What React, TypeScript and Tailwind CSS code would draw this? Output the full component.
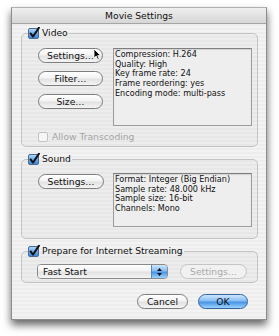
import type { ReactNode } from "react";

/* Movie Settings — an Aqua-era sheet, drawn at its shrunk screenshot size */

const aquaGray =
  "bg-[linear-gradient(to_bottom,#ffffff_0%,#f3f3f3_45%,#e2e2e2_55%,#f4f4f4_100%)]";
const aquaBlue =
  "bg-[linear-gradient(to_bottom,#cfe7ff_0%,#86bdf2_45%,#4894e4_55%,#9ad3ff_100%)]";

function Check() {
  return (
    <svg width="12" height="12" viewBox="0 0 12 12" aria-hidden className="shrink-0">
      <defs>
        <linearGradient id="cb" x1="0" y1="0" x2="0" y2="1">
          <stop offset="0" stopColor="#b9dbfb" />
          <stop offset="0.5" stopColor="#6aa8ea" />
          <stop offset="1" stopColor="#3c83d6" />
        </linearGradient>
      </defs>
      <rect x="0.5" y="1.5" width="10" height="10" rx="1.5" fill="url(#cb)" stroke="#4a6b94" />
      <path d="M2.6 6.4 L5 9.6 L11 0.6" fill="none" stroke="#111" strokeWidth="1.9" strokeLinecap="round" strokeLinejoin="round" />
    </svg>
  );
}

function Button({ children, w, off }: { children: ReactNode; w: string; off?: boolean }) {
  return (
    <div
      className={`${w} h-[15px] shrink-0 rounded-full border flex items-center justify-center text-[9.2px] leading-none ${
        off ? "border-[#c4c4c4] text-[#a9a9a9] bg-[#f1f1f1]" : `border-[#7d7d7d] text-[#111] ${aquaGray}`
      }`}
    >
      {children}
    </div>
  );
}

function Info({ lines, h }: { lines: string[]; h: string }) {
  return (
    <div className={`w-[139px] ${h} border border-[#9c9c9c] border-t-[#7f7f7f] bg-[#eeeeee] shadow-[inset_0_1px_1px_rgba(0,0,0,0.12)] pl-px pt-px text-[8.1px] leading-[9.7px] text-[#111]`}>
      {lines.map((l) => (
        <div key={l} className="whitespace-nowrap">{l}</div>
      ))}
    </div>
  );
}

function Group({ label, children, className = "" }: { label: string; children: ReactNode; className?: string }) {
  return (
    <fieldset className={`rounded-[5px] border border-[#c3c3c3] bg-black/[0.025] ${className}`}>
      <legend className="ml-[6px] flex items-center gap-[2px] pr-px text-[9.2px] leading-none text-[#111]">
        <Check />
        <span>{label}</span>
      </legend>
      {children}
    </fieldset>
  );
}

function Cursor() {
  return (
    <svg width="9" height="13" viewBox="0 0 9 13" className="absolute left-[81px] top-[40px]" aria-hidden>
      <path d="M1 1 L1 10 L3.2 8 L4.8 11.8 L6.2 11.2 L4.7 7.6 L7.6 7.6 Z" fill="#000" stroke="#fff" strokeWidth="0.8" strokeLinejoin="round" />
    </svg>
  );
}

export default function App() {
  return (
    <div className="w-[279px] h-[336px] bg-white pt-[7px] pl-[11px] font-[family-name:DejaVu_Sans,sans-serif]">
      <div className="relative w-[256px] h-[313px] flex flex-col border border-[#8c8c8c] border-t-[#b0b0b0] shadow-[0_5px_8px_rgba(0,0,0,0.6)] bg-[repeating-linear-gradient(to_bottom,#ededed_0px,#ededed_2px,#f3f3f3_2px,#f3f3f3_4px)]">
        {/* title bar */}
        <div className="h-[16px] shrink-0 flex items-center justify-center border-b border-[#a5a5a5] bg-[linear-gradient(to_bottom,#efefef,#d6d6d6)] text-[9.2px] text-[#111]">
          Movie Settings
        </div>

        <div className="flex-1 flex flex-col pl-[9px] pr-[8px] pt-[3px]">
          <Group label="Video">
            <div className="flex pl-[16px] pt-[9px]">
              <div className="flex flex-col gap-[8px]">
                <Button w="w-[65px]">Settings…</Button>
                <Button w="w-[65px]">Filter…</Button>
                <Button w="w-[65px]">Size…</Button>
              </div>
              <div className="ml-[10px]">
                <Info
                  h="h-[78px]"
                  lines={[
                    "Compression: H.264",
                    "Quality: High",
                    "Key frame rate: 24",
                    "Frame reordering: yes",
                    "Encoding mode: multi-pass",
                  ]}
                />
              </div>
            </div>
            <div className="mt-[5px] mb-[3px] h-[12px] flex items-center gap-[4px] pl-[16px]">
              <div className="w-[10px] h-[10px] rounded-[2px] border border-[#c2c2c2] bg-[#f6f6f6]" />
              <span className="text-[9.2px] leading-none text-[#a5a5a5]">Allow Transcoding</span>
            </div>
          </Group>

          <Group label="Sound" className="mt-[6px]">
            <div className="flex items-start pl-[16px] pt-[8px] pb-[11px]">
              <div className="mt-px">
                <Button w="w-[66px]">Settings…</Button>
              </div>
              <div className="ml-[9px]">
                <Info
                  h="h-[54px]"
                  lines={[
                    "Format: Integer (Big Endian)",
                    "Sample rate: 48.000 kHz",
                    "Sample size: 16-bit",
                    "Channels: Mono",
                  ]}
                />
              </div>
            </div>
          </Group>

          <Group label="Prepare for Internet Streaming" className="mt-[6px]">
            <div className="flex items-center pl-[15px] pt-[7px] pb-[3px]">
              <div className="w-[131px] h-[15px] flex rounded-[4px] border border-[#8a8a8a] overflow-hidden">
                <div className={`flex-1 flex items-center pl-[5px] text-[9.2px] leading-none text-[#111] ${aquaGray}`}>
                  Fast Start
                </div>
                <div className={`w-[16px] flex flex-col items-center justify-center gap-[2px] border-l border-[#5b86b8] ${aquaBlue}`}>
                  <svg width="5" height="3" viewBox="0 0 5 3" aria-hidden><path d="M0 3 L2.5 0 L5 3 Z" fill="#111" /></svg>
                  <svg width="5" height="3" viewBox="0 0 5 3" aria-hidden><path d="M0 0 L2.5 3 L5 0 Z" fill="#111" /></svg>
                </div>
              </div>
              <div className="ml-[12px]">
                <Button w="w-[67px]" off>Settings…</Button>
              </div>
            </div>
          </Group>

          <div className="mt-[11px] flex justify-end gap-[10px] pr-[10px]">
            <Button w="w-[51px]">Cancel</Button>
            <div className={`w-[50px] h-[15px] rounded-full border border-[#35649c] flex items-center justify-center text-[9.2px] leading-none text-[#111] ${aquaBlue}`}>
              OK
            </div>
          </div>
        </div>

        <Cursor />
      </div>
    </div>
  );
}
